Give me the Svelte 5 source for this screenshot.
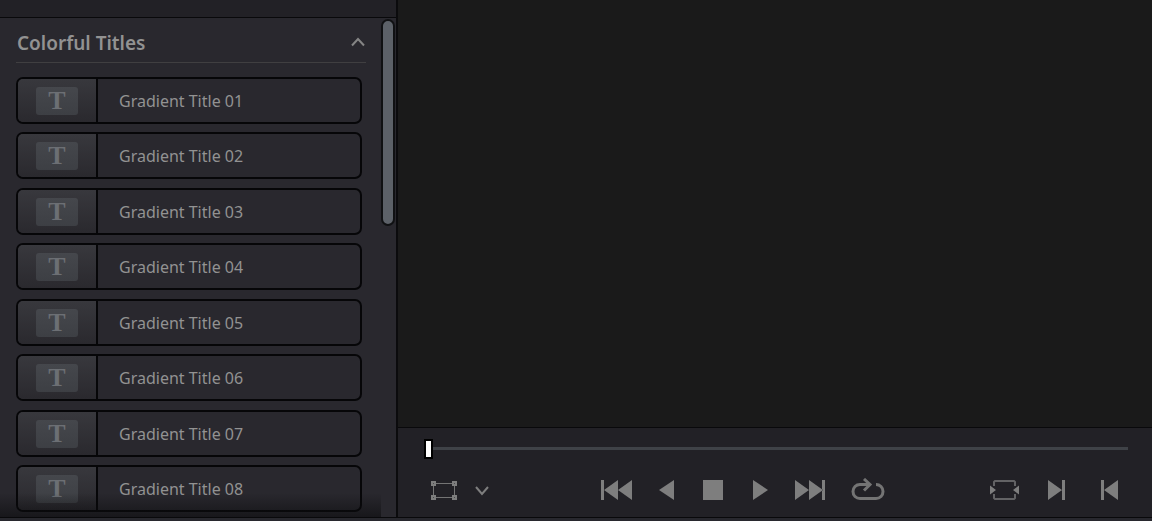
<script>
  const titles = ['01', '02', '03', '04', '05', '06', '07', '08'].map((n) => `Gradient Title ${n}`);

  let open = $state(true);
  let position = $state(0);
</script>

<div class="app">
  <aside class="library">
    <div class="topbar"></div>
    <div class="browser">
      <div class="content">
        <button class="category" onclick={() => (open = !open)} aria-expanded={open}>
          <span>Colorful Titles</span>
          <svg class="chevron" class:closed={!open} width="16" height="14" viewBox="0 0 16 14">
            <path d="M2 9.500 8 3l6 6.500" />
          </svg>
        </button>
        {#if open}
          <ul>
            {#each titles as title}
              <li>
                <button class="item">
                  <span class="thumb"><span class="glyph">T</span></span>
                  <span class="name">{title}</span>
                </button>
              </li>
            {/each}
          </ul>
        {/if}
        <div class="fade"></div>
      </div>
      <div class="scrollbar"><div class="grip"></div></div>
    </div>
  </aside>

  <main class="viewer">
    <div class="screen"></div>
    <div class="transport">
      <input class="scrub" type="range" min="0" max="1000" bind:value={position} aria-label="Position" />
      <div class="controls">
        <div class="group tools">
          <button aria-label="Transform">
            <svg width="26" height="20" viewBox="0 0 26 20">
              <path class="line" d="M2.500 3.500h21v14h-21z" />
              <path d="M0 1h5v5H0zM21 1h5v5h-5zM0 15h5v5H0zM21 15h5v5h-5z" />
              <path class="hole" d="M2 3h1v1H2zM23 3h1v1h-1zM2 17h1v1H2zM23 17h1v1h-1z" />
            </svg>
          </button>
          <button aria-label="Transform options">
            <svg width="24" height="20" viewBox="0 0 24 20">
              <path class="stroke" d="M4 7l6 7 6-7" />
            </svg>
          </button>
        </div>

        <div class="group playback">
          <button aria-label="Go to start">
            <svg width="32" height="20" viewBox="0 0 32 20">
              <path d="M0 0h3v20H0zM17 0v20L3 10zM31 0v20L17 10z" />
            </svg>
          </button>
          <button aria-label="Play reverse">
            <svg width="20" height="20" viewBox="0 0 20 20"><path d="M17 0v20L2 10z" /></svg>
          </button>
          <button aria-label="Stop">
            <svg width="24" height="20" viewBox="0 0 24 20"><path d="M2 0h20v20H2z" /></svg>
          </button>
          <button aria-label="Play">
            <svg width="22" height="20" viewBox="0 0 22 20"><path d="M4 0v20l15-10z" /></svg>
          </button>
          <button aria-label="Go to end">
            <svg width="32" height="20" viewBox="0 0 32 20">
              <path d="M0 0v20l14-10zM14 0v20l14-10zM27 0h3v20h-3z" />
            </svg>
          </button>
          <button aria-label="Loop">
            <svg width="34" height="24" viewBox="0 0 34 24">
              <path class="stroke loop" d="M25 6.500c4 0 7 3 7 7 0 4-3 7-7 7H9c-4 0-7-3-7-7s3-7 7-7h10M13 1l6 5.500-6 6" />
            </svg>
          </button>
        </div>

        <div class="group marks">
          <button aria-label="Match frame">
            <svg width="29" height="20" viewBox="0 0 29 20">
              <path class="line frame" d="M4 6V2l1-1h19l1 1v4M4 14v4l1 1h19l1-1v-4" />
              <path d="M0 5.500v9l6-4.500zM29 5.500v9L23 10z" />
            </svg>
          </button>
          <button aria-label="Next clip">
            <svg width="18" height="20" viewBox="0 0 18 20">
              <path d="M0 0v20l14-10zM14 0h3v20h-3z" />
            </svg>
          </button>
          <button aria-label="Previous clip">
            <svg width="18" height="20" viewBox="0 0 18 20">
              <path d="M0 0h3v20H0zM17 0v20L3 10z" />
            </svg>
          </button>
        </div>
      </div>
    </div>
  </main>
</div>

<style>
  :global(body) {
    margin: 0;
    background: #28282e;
  }

  .app {
    display: flex;
    box-sizing: border-box;
    height: 100vh;
    padding-bottom: 3px;
    font-family: "Noto Sans", "Open Sans", sans-serif;
    color: #929292;
  }

  button {
    margin: 0;
    padding: 0;
    border: 0;
    background: none;
    color: inherit;
    font: inherit;
    cursor: pointer;
  }

  svg {
    display: block;
    fill: #7e7e7e;
  }

  .library {
    display: flex;
    flex-direction: column;
    flex: none;
    box-sizing: border-box;
    width: 398px;
    border-right: 2px solid #0b0b0d;
    border-bottom: 1px solid #09090b;
    background: #29282e;
  }

  .topbar {
    flex: none;
    height: 17px;
    border-bottom: 1px solid #09090b;
    background: #222126;
  }

  .browser {
    display: flex;
    flex: 1;
    min-height: 0;
  }

  .content {
    position: relative;
    flex: 1;
    padding-left: 16px;
    overflow: hidden;
  }

  .category {
    display: flex;
    align-items: center;
    justify-content: space-between;
    box-sizing: border-box;
    width: 350px;
    height: 45px;
    padding: 6px 0 0 1px;
    border-bottom: 1px solid #403f41;
    font-size: 19px;
    font-weight: 600;
  }

  .chevron {
    fill: none;
    stroke: #858585;
    stroke-width: 2;
  }

  .chevron.closed {
    transform: rotate(180deg);
  }

  ul {
    margin: 0;
    padding: 14px 19px 0 0;
    list-style: none;
  }

  li {
    margin-bottom: 8px;
  }

  li:nth-child(even) {
    margin-bottom: 9px;
  }

  .item {
    display: flex;
    align-items: stretch;
    box-sizing: border-box;
    width: 100%;
    height: 47px;
    border: 2px solid #060608;
    border-radius: 7px;
    overflow: hidden;
    font-size: 16px;
    text-align: left;
  }

  .thumb {
    display: flex;
    align-items: center;
    justify-content: center;
    width: 78px;
    border-right: 2px solid #060608;
    background: linear-gradient(#38383d, #2a292e);
  }

  .glyph {
    width: 42px;
    height: 28px;
    border-radius: 3px;
    background: linear-gradient(#45474c, #3d3f44);
    color: #6c6f74;
    font: bold 26px/28px "Liberation Serif", serif;
    text-align: center;
  }

  .name {
    align-self: center;
    padding-left: 21px;
  }

  .fade {
    position: absolute;
    inset: auto 0 0;
    height: 24px;
    background: linear-gradient(transparent, rgba(12, 12, 14, 0.6));
    pointer-events: none;
  }

  .scrollbar {
    flex: none;
    width: 15px;
    padding-top: 1px;
  }

  .grip {
    box-sizing: border-box;
    width: 14px;
    height: 207px;
    border: 2px solid #101113;
    border-radius: 7px;
    background: #5c6168;
  }

  .viewer {
    display: flex;
    flex-direction: column;
    flex: 1;
    min-width: 0;
    border-bottom: 1px solid #09090b;
  }

  .screen {
    flex: 1;
    background: #1a1a1a;
  }

  .transport {
    padding: 11px 24px 15px 26px;
    border-top: 1px solid #09090b;
    background: #222126;
  }

  .scrub {
    display: block;
    width: 100%;
    height: 20px;
    margin: 0;
    appearance: none;
    background: linear-gradient(#3f4247, #3f4247) 0 8px / 100% 3px no-repeat;
  }

  .scrub::-webkit-slider-thumb {
    appearance: none;
    box-sizing: border-box;
    width: 9px;
    height: 20px;
    border: 2px solid #000;
    background: #fff;
  }

  .controls {
    display: flex;
    align-items: center;
    justify-content: space-between;
    height: 24px;
    padding: 19px 9px 0 7px;
  }

  .group {
    display: flex;
    align-items: center;
  }

  .tools {
    gap: 15px;
  }

  .playback {
    gap: 24px;
  }

  .marks {
    gap: 29px;
  }

  .marks button:last-child {
    margin-left: 6px;
  }

  .line {
    fill: none;
    stroke: #747474;
  }

  .frame {
    stroke: #636365;
    stroke-width: 2;
  }

  .stroke {
    fill: none;
    stroke: #7e7e7e;
    stroke-width: 2;
  }

  .loop {
    stroke: #747474;
    stroke-width: 3;
  }

  .hole {
    fill: #4a4a4c;
  }
</style>
